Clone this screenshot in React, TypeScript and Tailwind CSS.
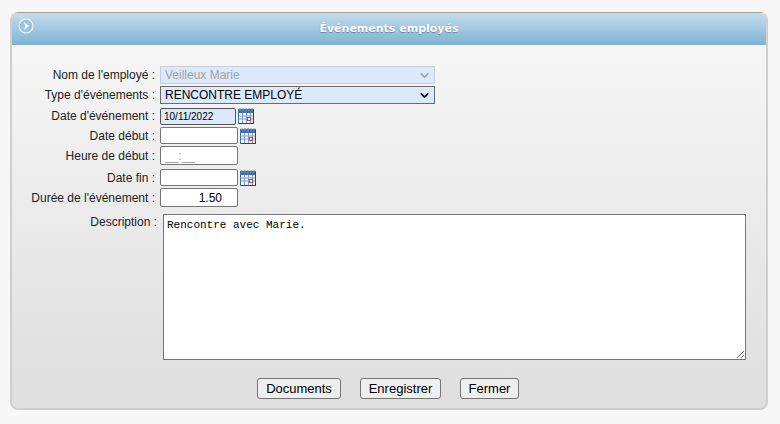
import React from 'react';
import { ChevronDown } from 'lucide-react';

const CalendarIcon: React.FC = () => (
  <svg width="16" height="16" viewBox="0 0 16 16" className="shrink-0">
    <rect x="0.5" y="1.5" width="15" height="14" fill="#eef3fb" stroke="#4a6fa5" />
    <rect x="0" y="1" width="16" height="4" fill="#3f6fb0" />
    <path d="M2 0v3M5 0v3M8 0v3M11 0v3M14 0v3" stroke="#7d8fa8" strokeWidth="1" />
    <path d="M1 8h14M1 11h14M4.5 5v10M8.5 5v10M12.5 5v10" stroke="#7f9fd0" strokeWidth="1" />
    <rect x="9.5" y="9.5" width="3" height="3" fill="#fff" stroke="#e0431f" />
    <path d="M15.5 2v13.5H1" stroke="#2f4560" fill="none" />
  </svg>
);

const labelClass = 'w-[143px] text-right text-[12px] leading-none text-[#222] whitespace-nowrap shrink-0';
const inputClass = 'w-[78px] border border-[#767676] rounded-[2px] bg-white outline-none';

const Row: React.FC<{ label: string; className: string; children: React.ReactNode }> = ({ label, className, children }) => (
  <div className={`flex items-center ${className}`}>
    <span className={labelClass}>{label} :</span>
    <div className="ml-[5px] flex items-center gap-[2px]">{children}</div>
  </div>
);

const SelectField: React.FC<{ value: string; disabled?: boolean }> = ({ value, disabled }) => (
  <div className="relative w-[275px] h-[18px]">
    <select
      disabled={disabled}
      value={value}
      onChange={() => {}}
      className={`block w-full h-[18px] appearance-none rounded-none pl-[4px] text-[12px] leading-[16px] outline-none bg-[#dbe9fb] border ${
        disabled ? 'border-[#c5d0de] text-[#a3a3a3] opacity-100' : 'border-[#6b6b6b] text-black'
      }`}
    >
      <option>{value}</option>
    </select>
    <ChevronDown
      size={13}
      strokeWidth={3}
      className={`absolute right-[4px] top-[3px] pointer-events-none ${disabled ? 'text-[#a3a3a3]' : 'text-black'}`}
    />
  </div>
);

const FormButton: React.FC<{ label: string; className: string }> = ({ label, className }) => (
  <button className={`h-[21px] border border-[#767676] rounded-[3px] bg-[#efefef] text-[13px] leading-none text-black ${className}`}>
    {label}
  </button>
);

const App: React.FC = () => {
  return (
    <div className="w-[780px] h-[424px] bg-[#f7f7f7] pt-[12px] pl-[10px] font-['Liberation_Sans',Arial,sans-serif]">
      <div className="w-[758px] h-[398px] flex flex-col rounded-[8px] overflow-hidden border-r-2 border-b-2 border-l-2 border-[#cfcfcf] bg-gradient-to-b from-[#f8f8f8] to-[#dedede]">
        <div className="h-[33px] -mx-[2px] shrink-0 flex items-center relative border-t border-[#a3a3a3] bg-gradient-to-b from-[#c5ddec] to-[#7fb1d4]">
          <svg width="16" height="16" viewBox="0 0 16 16" className="absolute left-[8px] top-[5px]">
            <circle cx="8" cy="8" r="7" fill="#9cc3dd" stroke="#f1f6fa" strokeWidth="1.2" />
            <path d="M5.5 3.8 11 8l-5.5 4.2L7.5 8z" fill="#fff" />
          </svg>
          <h1 className="w-full text-center text-[11px] font-bold text-white font-['DejaVu_Sans',Verdana,sans-serif] [text-shadow:0_1px_1px_rgba(60,100,130,0.6)]">
            Événements employés
          </h1>
        </div>

        <div className="flex flex-col pt-[21px]">
          <Row label="Nom de l'employé" className="h-[18px]">
            <SelectField value="Veilleux Marie" disabled />
          </Row>
          <Row label="Type d'événements" className="h-[18px] mt-[2px]">
            <SelectField value="RENCONTRE EMPLOYÉ" />
          </Row>
          <Row label="Date d'événement" className="h-[16px] mt-[4px]">
            <input
              readOnly
              value="10/11/2022"
              className="w-[76px] h-[17px] border border-[#555] rounded-[2px] bg-[#dbe9fb] pl-[3px] text-[10px] text-black outline-none"
            />
            <CalendarIcon />
          </Row>
          <Row label="Date début" className="h-[17px] mt-[3px]">
            <input readOnly className={`${inputClass} h-[17px]`} />
            <CalendarIcon />
          </Row>
          <Row label="Heure de début" className="h-[19px] mt-[2px]">
            <input readOnly placeholder="__:__" className={`${inputClass} h-[19px] pl-[4px] text-[12px] placeholder:text-[#9a9a9a]`} />
          </Row>
          <Row label="Date fin" className="h-[17px] mt-[4px]">
            <input readOnly className={`${inputClass} h-[17px]`} />
            <CalendarIcon />
          </Row>
          <Row label="Durée de l'événement" className="h-[19px] mt-[2px]">
            <input readOnly value="1.50" className={`${inputClass} h-[19px] text-right pr-[15px] text-[12px] text-black`} />
          </Row>

          <div className="flex items-start mt-[7px]">
            <span className={`${labelClass} w-[145px] pt-[2px]`}>Description :</span>
            <textarea
              readOnly
              defaultValue="Rencontre avec Marie."
              className="ml-[6px] w-[583px] h-[146px] border border-[#767676] bg-white pl-[3px] pt-[3px] text-[11px] leading-[14px] text-black outline-none font-['Liberation_Mono',Consolas,monospace]"
            />
          </div>

          <div className="flex mt-[18px] ml-[245px]">
            <FormButton label="Documents" className="w-[84px]" />
            <FormButton label="Enregistrer" className="w-[81px] ml-[19px]" />
            <FormButton label="Fermer" className="w-[59px] ml-[19px]" />
          </div>
        </div>
      </div>
    </div>
  );
};

export default App;
